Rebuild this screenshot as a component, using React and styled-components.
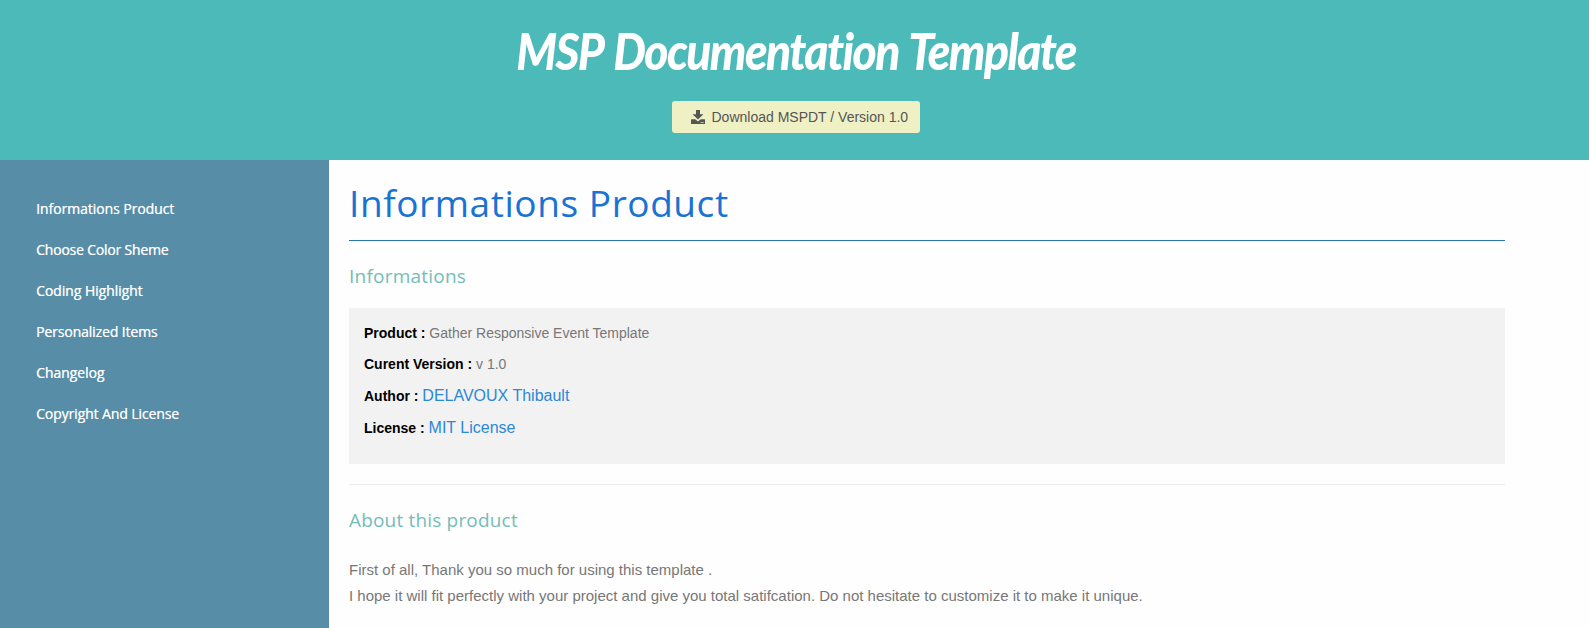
import React from "react";
import styled, { createGlobalStyle } from "styled-components";

const GlobalStyle = createGlobalStyle`
  * { box-sizing: border-box; }
  body {
    margin: 0;
    background: #fefefe;
    font-family: "Liberation Sans", Arial, sans-serif;
    color: #777;
  }
  h1, h2, h3, p, ul { margin: 0; padding: 0; }
`;

const rounded = `"Open Sans", "Noto Sans", sans-serif`;

const Page = styled.div`
  height: 628px;
  display: flex;
  flex-direction: column;
  overflow: hidden;
`;

const Header = styled.header`
  height: 160px;
  flex: none;
  display: flex;
  flex-direction: column;
  align-items: center;
  padding-left: 2px;
  background: #4dbaba;
`;

const Title = styled.h1`
  margin-top: 20px;
  padding-left: 2px;
  height: 81px;
  font: italic 900 52px/61px Lato, sans-serif;
  letter-spacing: -1.8px;
  word-spacing: 3px;
  transform: scaleX(0.888);
  color: #fff;
  white-space: nowrap;
`;

const DownloadButton = styled.a`
  display: flex;
  align-items: center;
  width: 248px;
  height: 32px;
  padding-left: 19px;
  gap: 7px;
  border-radius: 3px;
  background: #eff1c5;
  color: #555;
  font-size: 14px;
  white-space: nowrap;
`;

const Body = styled.div`
  flex: 1;
  display: flex;
`;

const Sidebar = styled.nav`
  width: 329px;
  flex: none;
  padding: 28px 36px;
  background: #588da8;
`;

const NavList = styled.ul`
  list-style: none;
`;

const NavItem = styled.li`
  height: 41px;
  font: 500 14px/41px ${rounded};
  letter-spacing: ${(p) => p.$spacing}px;
  text-shadow: 0.4px 0 rgba(255, 255, 255, 0.7);
  color: #fff;
  white-space: nowrap;
`;

const Content = styled.main`
  width: 1176px;
  padding: 20px 0 0 20px;
`;

const PageTitle = styled.h2`
  height: 61px;
  border-bottom: 1px solid #2878b0;
  font: 400 37px/46px ${rounded};
  letter-spacing: 0.57px;
  color: #1873d3;
`;

const SectionTitle = styled.h3`
  height: ${(p) => p.$height}px;
  padding-top: ${(p) => p.$top}px;
  font: 400 19px/28px ${rounded};
  letter-spacing: ${(p) => p.$spacing}px;
  color: #74bdb9;
`;

const InfoBox = styled.section`
  height: 156px;
  padding: 10px 15px;
  background: #f2f2f2;
`;

const InfoRow = styled.p`
  height: ${(p) => p.$height}px;
  font-size: 14px;
  line-height: 31px;
`;

const Label = styled.strong`
  color: #000;
`;

const Link = styled.a`
  font-size: 16px;
  color: #2b87d8;
`;

const Divider = styled.hr`
  height: 1px;
  margin: 20px 0 0;
  border: 0;
  background: #ececec;
`;

const Paragraph = styled.p`
  font-size: 15px;
  line-height: 26px;
`;

const DownloadIcon = () => (
  <svg width="14" height="14" viewBox="0 0 14 14" fill="#555">
    <path d="M5 0h4v4.2h3.4L7 9.6 1.6 4.2H5z" />
    <path
      fillRule="evenodd"
      d="M.5 9.3h3.7L7 11.4l2.8-2.1h3.7q.5 0 .5.5v3.7q0 .5-.5.5H.5q-.5 0-.5-.5V9.8q0-.5.5-.5zM9.6 12v.8h3V12z"
    />
  </svg>
);

const links = [
  ["Informations Product", -0.06],
  ["Choose Color Sheme", -0.2],
  ["Coding Highlight", -0.06],
  ["Personalized Items", -0.12],
  ["Changelog", -0.05],
  ["Copyright And License", -0.1],
];

export default function App() {
  return (
    <Page>
      <GlobalStyle />
      <Header>
        <Title>MSP Documentation Template</Title>
        <DownloadButton>
          <DownloadIcon />
          Download MSPDT / Version 1.0
        </DownloadButton>
      </Header>
      <Body>
        <Sidebar>
          <NavList>
            {links.map(([text, spacing]) => (
              <NavItem key={text} $spacing={spacing}>{text}</NavItem>
            ))}
          </NavList>
        </Sidebar>
        <Content>
          <PageTitle>Informations Product</PageTitle>
          <SectionTitle $height={67} $top={21} $spacing={0.22}>Informations</SectionTitle>
          <InfoBox>
            <InfoRow $height={31}><Label>Product :</Label> Gather Responsive Event Template</InfoRow>
            <InfoRow $height={31}><Label>Curent Version :</Label> v 1.0</InfoRow>
            <InfoRow $height={32}><Label>Author :</Label> <Link>DELAVOUX Thibault</Link></InfoRow>
            <InfoRow $height={32}><Label>License :</Label> <Link>MIT License</Link></InfoRow>
          </InfoBox>
          <Divider />
          <SectionTitle $height={72} $top={21} $spacing={0.18}>About this product</SectionTitle>
          <Paragraph>
            First of all, Thank you so much for using this template .<br />
            I hope it will fit perfectly with your project and give you total satifcation. Do not hesitate to customize it to make it unique.
          </Paragraph>
        </Content>
      </Body>
    </Page>
  );
}
